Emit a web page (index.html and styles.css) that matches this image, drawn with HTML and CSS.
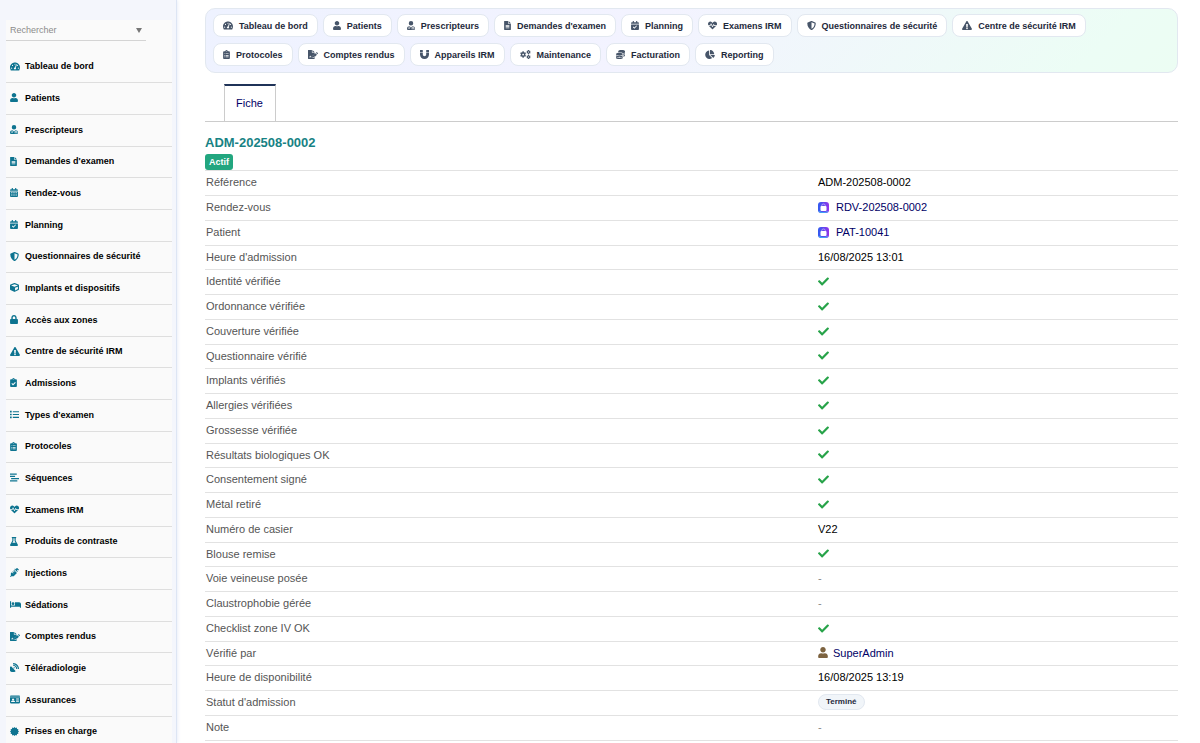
FILE: index.html
```html
<!DOCTYPE html>
<html lang="fr">
<head>
<meta charset="utf-8">
<meta name="viewport" content="width=device-width, initial-scale=1">
<title>ADM-202508-0002</title>
<link rel="stylesheet" href="styles.css">
</head>
<body>
<svg class="sprite" aria-hidden="true">
<defs>
<linearGradient id="app-a" x1="0" y1="0" x2="1" y2="0"><stop offset="0" stop-color="#2f5cf0"/><stop offset="1" stop-color="#9333ea"/></linearGradient>
</defs>
<symbol id="gauge" viewBox="0 0 576 512"><path d="M288 32C128.94 32 0 160.94 0 320c0 52.8 14.25 102.26 39.06 144.8 5.61 9.62 16.3 15.2 27.44 15.2h443c11.14 0 21.83-5.58 27.44-15.2C561.75 422.26 576 372.8 576 320c0-159.06-128.94-288-288-288zm0 64c14.71 0 26.58 10.13 30.32 23.65-1.11 2.26-2.64 4.23-3.45 6.67l-9.22 27.67c-5.13 3.49-10.97 6.01-17.64 6.01-17.67 0-32-14.33-32-32S270.33 96 288 96zM96 384c-17.67 0-32-14.33-32-32s14.33-32 32-32 32 14.33 32 32-14.33 32-32 32zm48-160c-17.67 0-32-14.33-32-32s14.33-32 32-32 32 14.33 32 32-14.33 32-32 32zm246.77-72.41l-61.33 184C343.13 347.33 352 364.54 352 384c0 11.72-3.38 22.55-8.88 32H232.88c-5.5-9.45-8.88-20.28-8.88-32 0-33.94 26.5-61.43 59.9-63.59l61.34-184.01c4.17-12.56 17.73-19.45 30.36-15.17 12.57 4.19 19.35 17.79 15.17 30.36zm14.66 57.2l15.52-46.55c3.47-1.29 7.13-2.23 11.05-2.23 17.67 0 32 14.33 32 32s-14.33 32-32 32c-11.38-.01-20.89-6.28-26.57-15.22zM480 384c-17.67 0-32-14.33-32-32s14.33-32 32-32 32 14.33 32 32-14.33 32-32 32z"/></symbol>
<symbol id="user" viewBox="0 0 448 512"><path d="M224 256c70.7 0 128-57.3 128-128S294.7 0 224 0 96 57.3 96 128s57.3 128 128 128zm89.6 32h-16.7c-22.2 10.2-46.9 16-72.9 16s-50.6-5.8-72.9-16h-16.7C60.2 288 0 348.2 0 422.4V464c0 26.5 21.5 48 48 48h352c26.5 0 48-21.5 48-48v-41.6c0-74.2-60.2-134.4-134.4-134.4z"/></symbol>
<symbol id="doctor" viewBox="0 0 448 512"><path fill-rule="evenodd" d="M224 256a128 128 0 1 0 0-256 128 128 0 0 0 0 256zM96 292C40 306 0 360 0 422v42c0 26 22 48 48 48h352c26 0 48-22 48-48v-42c0-62-40-116-96-130v52c36 8 56 32 56 64v56h-56v-32h24v-24c0-22-18-32-40-32s-40 10-40 32v24h24v32h-56v-56c0-32 20-56 56-64v-56h-16l-80 90-80-90h-16v84c22 6 36 22 36 44 0 26-20 46-46 46s-46-20-46-46c0-22 14-38 28-44zm22 112a18 18 0 1 0 1 0z"/></symbol>
<symbol id="file" viewBox="0 0 384 512"><path fill-rule="evenodd" d="M24 0h200v136c0 13 11 24 24 24h136v328c0 13-11 24-24 24H24c-13 0-24-11-24-24V24C0 11 11 0 24 0zm232 0 128 128H256zM88 224v40h208v-40zm0 72v40h208v-40zm0 72v40h208v-40z"/></symbol>
<symbol id="calendar" viewBox="0 0 448 512"><path fill-rule="evenodd" d="M96 0h64v64h128V0h64v64h48c26 0 48 22 48 48v48H0v-48c0-26 22-48 48-48h48zM0 192h448v272c0 26-22 48-48 48H48c-26 0-48-22-48-48zm64 52v56h72v-56zm124 0v56h72v-56zm124 0v56h72v-56zM64 364v56h72v-56zm124 0v56h72v-56zm124 0v56h72v-56z"/></symbol>
<symbol id="calcheck" viewBox="0 0 448 512"><path fill-rule="evenodd" d="M96 0h64v64h128V0h64v64h48c26 0 48 22 48 48v48H0v-48c0-26 22-48 48-48h48zM0 192h448v272c0 26-22 48-48 48H48c-26 0-48-22-48-48zm336 96-34-36-112 112-50-50-36 36 86 86z"/></symbol>
<symbol id="shield" viewBox="0 0 512 512"><path d="M466.5 83.7l-192-80a48.15 48.15 0 0 0-36.9 0l-192 80C27.7 91.1 16 108.6 16 128c0 198.5 114.5 335.7 221.5 380.3 11.8 4.9 25.1 4.9 36.9 0C360.1 472.6 496 349.3 496 128c0-19.4-11.7-36.9-29.5-44.3zM256.1 446.3l-.1-381 175.9 73.3c-3.3 151.4-82.1 261.1-175.8 307.7z"/></symbol>
<symbol id="cube" viewBox="0 0 512 512"><path fill-rule="evenodd" d="M239 6 31 84C12 91 0 109 0 129v226c0 18 10 35 27 43l208 104c13 7 29 7 42 0l208-104c17-8 27-25 27-43V129c0-20-12-38-31-45L273 6c-11-4-23-4-34 0zm17 62 192 72v1l-192 78-192-78v-1zm32 357V275l160-65v135z"/></symbol>
<symbol id="lock" viewBox="0 0 448 512"><path d="M400 224h-24v-72C376 68.2 307.8 0 224 0S72 68.2 72 152v72H48c-26.5 0-48 21.5-48 48v192c0 26.5 21.5 48 48 48h352c26.5 0 48-21.5 48-48V272c0-26.5-21.5-48-48-48zm-104 0H152v-72c0-39.7 32.3-72 72-72s72 32.3 72 72v72z"/></symbol>
<symbol id="warn" viewBox="0 0 576 512"><path fill-rule="evenodd" d="M569.5 440C588 472 564.800 512 528 512H48c-37 0-60-40-41.500-72L246.400 24c18.500-32 64.700-32 83.200 0zM238 168l12 184h76l12-184zm50 210a44 44 0 1 0 1 0z"/></symbol>
<symbol id="clipcheck" viewBox="0 0 384 512"><path fill-rule="evenodd" d="M336 64h-80a64 64 0 0 0-128 0H48C22 64 0 86 0 112v352c0 26 22 48 48 48h288c26 0 48-22 48-48V112c0-26-22-48-48-48zM192 40a24 24 0 1 1 0 48 24 24 0 0 1 0-48zm128 226-40-42-116 116-50-50-42 42 92 92z"/></symbol>
<symbol id="clipboard" viewBox="0 0 384 512"><path fill-rule="evenodd" d="M336 64h-80a64 64 0 0 0-128 0H48C22 64 0 86 0 112v352c0 26 22 48 48 48h288c26 0 48-22 48-48V112c0-26-22-48-48-48zM192 40a24 24 0 1 1 0 48 24 24 0 0 1 0-48zM72 192v40h40v-40zm72 0v40h168v-40zm-72 88v40h40v-40zm72 0v40h168v-40zm-72 88v40h40v-40zm72 0v40h168v-40z"/></symbol>
<symbol id="list" viewBox="0 0 512 512"><path d="M0 48h96v96H0zm0 160h96v96H0zm0 160h96v96H0zM160 64h352v64H160zm0 160h352v64H160zm0 160h352v64H160z"/></symbol>
<symbol id="stream" viewBox="0 0 512 512"><path d="M0 32h384v64H0zm0 128h288v64H0zm64 128h448v64H64zM0 416h416v64H0z"/></symbol>
<symbol id="heart" viewBox="0 0 512 512"><path d="M320 244l-50 99c-6 12-23 12-29 0l-71-137-28 66c-2 6-8 10-15 10H55l175 179c14 15 37 15 52 0l175-179H348zM473 74C423 22 340 22 290 74l-34 35-34-35C172 22 89 22 39 74c-46 48-50 122-12 174h89l43-103c5-13 23-13 29 0l69 140 50-99c6-12 23-12 29 0l36 62h117c38-52 34-126-12-174z"/></symbol>
<symbol id="flask" viewBox="0 0 448 512"><path fill-rule="evenodd" d="M120 0h208c13 0 24 11 24 24v16c0 13-11 24-24 24h-8v144l118 214c25 39-3 90-50 90H60c-47 0-75-51-50-90l118-214V64h-8c-13 0-24-11-24-24V24c0-13 11-24 24-24zm72 64v160l-60 96h184l-60-96V64z"/></symbol>
<symbol id="syringe" viewBox="0 0 512 512"><path fill-rule="evenodd" d="M410 0l102 102-34 34-34-34-46 46 46 46-34 34-160-160 34-34 46 46 46-46-34-34zM233 118l161 161-184 184H92L34 512 0 478l49-58V302l60-60 64 64 28-28-64-64 32-32 64 64 28-28-64-64z"/></symbol>
<symbol id="bed" viewBox="0 0 640 512"><path fill-rule="evenodd" d="M0 64h64v256h224V144c0-9 7-16 16-16h224c62 0 112 50 112 112v208h-64v-64H64v64H0zm176 64a80 80 0 1 1 0 160 80 80 0 0 1 0-160z"/></symbol>
<symbol id="sign" viewBox="0 0 576 512"><path fill-rule="evenodd" d="M24 0h200v136c0 13 11 24 24 24h136v60L256 346v70h70l58-58v130c0 13-11 24-24 24H24c-13 0-24-11-24-24V24C0 11 11 0 24 0zm232 0 128 128H256zM64 384v32h144v-32h-40l-32-64-38 64zM520 130l48 48c10 10 10 24 0 34l-30 30-82-82 30-30c10-10 24-10 34 0zM434 182l82 82-180 180h-82v-82z"/></symbol>
<symbol id="dish" viewBox="0 0 512 512"><path d="M306 462c8 8 7 21-3 27-94 55-216 42-297-39-81-81-94-203-39-297 0 0 0 0 0 0zM50 208c5-10 19-12 27-4l104 105 27-27c-5-9-5-20 0-30 10-18 34-22 50-8 15 16 11 40-8 50-9 5-21 5-30 0l-27 27 105 104c8 8 6 22-4 27-78 42-176 30-242-36S8 286 50 208zM193 0c-10-1-17 7-17 16v34c0 8 6 15 15 16 138 9 247 118 256 256 1 8 8 14 16 14h33c9 0 17-7 16-17C502 148 364 10 193 0zm0 97c-9-1-17 7-17 16v33c0 9 6 15 14 16 85 9 152 76 161 161 1 8 8 14 16 14h33c9 0 17-8 16-17C404 200 312 108 193 97z"/></symbol>
<symbol id="card" viewBox="0 0 576 512"><path fill-rule="evenodd" d="M48 32h480c26 0 48 22 48 48v16H0V80c0-26 22-48 48-48zM0 128h576v304c0 26-22 48-48 48H48c-26 0-48-22-48-48zm176 64a64 64 0 1 0 1 0zM64 400h224c0-52-30-68-60-68H124c-30 0-60 16-60 68zM352 200v40h160v-40zm0 72v40h160v-40zm0 72v40h160v-40z"/></symbol>
<symbol id="badge" viewBox="0 0 512 512"><path d="m256 0 56 56 72-22 20 74 74 20-22 72 56 56-56 56 22 72-74 20-20 74-72-22-56 56-56-56-72 22-20-74-74-20 22-72-56-56 56-56-22-72 74-20 20-74 72 22z"/></symbol>
<symbol id="magnet" viewBox="0 0 512 512"><path d="M12 160h136c7 0 12 5 12 12v84c0 128 192 128 192 0v-84c0-7 5-12 12-12h136c7 0 12 5 12 12v80c0 150-106 260-256 260S0 402 0 253v-81c0-7 5-12 12-12zM24 0h112c13 0 24 11 24 24v104H0V24C0 11 11 0 24 0zm352 0h112c13 0 24 11 24 24v104H352V24c0-13 11-24 24-24z"/></symbol>
<symbol id="cogs" viewBox="40 0 600 512"><path fill-rule="evenodd" d="M168 78h72l10 50 34 20 48-17 36 62-38 34v58l38 34-36 62-48-17-34 20-10 50h-72l-10-50-34-20-48 17-36-62 38-34v-58l-38-34 36-62 48 17 34-20zm36 130a48 48 0 1 0 1 0zM488 0h48l8 32 26 15 32-9 24 41-24 24v30l24 24-24 41-32-9-26 15-8 32h-48l-8-32-26-15-32 9-24-41 24-24v-30l-24-24 24-41 32 9 26-15zm24 88a30 30 0 1 0 1 0zM488 276h48l8 32 26 15 32-9 24 41-24 24v30l24 24-24 41-32-9-26 15-8 32h-48l-8-32-26-15-32 9-24-41 24-24v-30l-24-24 24-41 32 9 26-15zm24 88a30 30 0 1 0 1 0z"/></symbol>
<symbol id="coins" viewBox="0 0 512 512"><path d="M0 405c41 29 116 43 192 43s151-14 192-43v43c0 35-86 64-192 64S0 483 0 448zM0 300c41 34 116 52 192 52s151-18 192-52v52c0 35-86 64-192 64S0 387 0 352zM192 160c106 0 192 36 192 80s-86 80-192 80S0 284 0 240s86-80 192-80zM416 311c40-7 74-20 96-36v45c0 26-39 48-96 58zM512 180v44c0 26-39 48-96 58v-42c0-10-3-20-8-28 43-7 80-18 104-32zM320 0c106 0 192 29 192 64s-86 64-192 64-192-29-192-64S214 0 320 0zM512 85v43c0 27-49 50-119 60-44-41-121-60-201-60-21 0-41 1-61 4-2-4-3-28-3-47 41 29 116 43 192 43s151-14 192-43z"/></symbol>
<symbol id="pie" viewBox="0 0 544 512"><path d="M528 288H290l158 158c6 6 16 7 23 1 38-37 65-86 73-141 1-10-6-18-16-18zM511 223C503 103 409 9 289 1c-9-1-17 7-17 16v223h223c9 0 17-8 16-17zM224 288V50c0-10-8-17-18-16C87 51 -4 155 0 280c4 128 114 233 243 232 50-1 97-17 135-44 8-6 9-17 2-24z"/></symbol>
<symbol id="check" viewBox="0 0 512 512"><path d="M173.898 439.404l-166.400-166.400c-9.997-9.997-9.997-26.206 0-36.204l36.203-36.204c9.997-9.998 26.207-9.998 36.204 0L192 312.690 432.095 72.596c9.997-9.997 26.207-9.997 36.204 0l36.203 36.204c9.997 9.997 9.997 26.206 0 36.204l-294.400 294.401c-9.998 9.997-26.207 9.997-36.204-.001z"/></symbol>
<symbol id="app" viewBox="0 0 22 22"><rect width="22" height="22" rx="6" fill="url(#app-a)"/><path d="M3 18q8 5 16 0l1 2q-9 4-18 0z" fill="#38bdf8"/><path d="M7.500 9V7q0-3 3.500-3t3.500 3v2" fill="none" stroke="#c7b8fb" stroke-width="1.500"/><rect x="5" y="8" width="12" height="10" rx="2" fill="#fff"/></symbol>
</svg>

<div class="layout">
<aside class="sidebar">
<div class="panel">
<div class="search">
<select aria-label="Rechercher"><option>Rechercher</option></select>
<svg class="caret" viewBox="0 0 6 5" aria-hidden="true"><path d="M0 0h6L3 5z"/></svg>
</div>
<nav aria-label="Menu principal">
<ul class="menu">
<li><a href="#"><span class="slot"><svg class="icon w10"><use href="#gauge"/></svg></span>Tableau de bord</a></li>
<li><a href="#"><span class="slot"><svg class="icon w8"><use href="#user"/></svg></span>Patients</a></li>
<li><a href="#"><span class="slot"><svg class="icon w8"><use href="#doctor"/></svg></span>Prescripteurs</a></li>
<li><a href="#"><span class="slot"><svg class="icon w7"><use href="#file"/></svg></span>Demandes d'examen</a></li>
<li><a href="#"><span class="slot"><svg class="icon w8"><use href="#calendar"/></svg></span>Rendez-vous</a></li>
<li><a href="#"><span class="slot"><svg class="icon w8"><use href="#calcheck"/></svg></span>Planning</a></li>
<li><a href="#"><span class="slot"><svg class="icon w9"><use href="#shield"/></svg></span>Questionnaires de sécurité</a></li>
<li><a href="#"><span class="slot"><svg class="icon w9"><use href="#cube"/></svg></span>Implants et dispositifs</a></li>
<li><a href="#"><span class="slot"><svg class="icon w8"><use href="#lock"/></svg></span>Accès aux zones</a></li>
<li><a href="#"><span class="slot"><svg class="icon w10"><use href="#warn"/></svg></span>Centre de sécurité IRM</a></li>
<li><a href="#"><span class="slot"><svg class="icon w7"><use href="#clipcheck"/></svg></span>Admissions</a></li>
<li><a href="#"><span class="slot"><svg class="icon w9"><use href="#list"/></svg></span>Types d'examen</a></li>
<li><a href="#"><span class="slot"><svg class="icon w7"><use href="#clipboard"/></svg></span>Protocoles</a></li>
<li><a href="#"><span class="slot"><svg class="icon w9"><use href="#stream"/></svg></span>Séquences</a></li>
<li><a href="#"><span class="slot"><svg class="icon w9"><use href="#heart"/></svg></span>Examens IRM</a></li>
<li><a href="#"><span class="slot"><svg class="icon w8"><use href="#flask"/></svg></span>Produits de contraste</a></li>
<li><a href="#"><span class="slot"><svg class="icon w9"><use href="#syringe"/></svg></span>Injections</a></li>
<li><a href="#"><span class="slot"><svg class="icon w11"><use href="#bed"/></svg></span>Sédations</a></li>
<li><a href="#"><span class="slot"><svg class="icon w10"><use href="#sign"/></svg></span>Comptes rendus</a></li>
<li><a href="#"><span class="slot"><svg class="icon w9"><use href="#dish"/></svg></span>Téléradiologie</a></li>
<li><a href="#"><span class="slot"><svg class="icon w10"><use href="#card"/></svg></span>Assurances</a></li>
<li><a href="#"><span class="slot"><svg class="icon w9"><use href="#badge"/></svg></span>Prises en charge</a></li>
</ul>
</nav>
</div>
</aside>

<main class="content">
<nav class="shortcuts" aria-label="Raccourcis">
<a href="#"><svg class="icon w10"><use href="#gauge"/></svg>Tableau de bord</a>
<a href="#"><svg class="icon w8"><use href="#user"/></svg>Patients</a>
<a href="#"><svg class="icon w8"><use href="#doctor"/></svg>Prescripteurs</a>
<a href="#"><svg class="icon w7"><use href="#file"/></svg>Demandes d'examen</a>
<a href="#"><svg class="icon w8"><use href="#calcheck"/></svg>Planning</a>
<a href="#"><svg class="icon w9"><use href="#heart"/></svg>Examens IRM</a>
<a href="#"><svg class="icon w9"><use href="#shield"/></svg>Questionnaires de sécurité</a>
<a href="#"><svg class="icon w10"><use href="#warn"/></svg>Centre de sécurité IRM</a>
<a href="#"><svg class="icon w7"><use href="#clipboard"/></svg>Protocoles</a>
<a href="#"><svg class="icon w10"><use href="#sign"/></svg>Comptes rendus</a>
<a href="#"><svg class="icon w9"><use href="#magnet"/></svg>Appareils IRM</a>
<a href="#"><svg class="icon w11"><use href="#cogs"/></svg>Maintenance</a>
<a href="#"><svg class="icon w9"><use href="#coins"/></svg>Facturation</a>
<a href="#"><svg class="icon w10"><use href="#pie"/></svg>Reporting</a>
</nav>

<div class="tabs"><a class="tab" href="#">Fiche</a></div>

<header class="record">
<h1>ADM-202508-0002</h1>
<span class="status">Actif</span>
</header>

<table class="fields">
<tbody>
<tr><th scope="row">Référence</th><td>ADM-202508-0002</td></tr>
<tr><th scope="row">Rendez-vous</th><td><a class="ref" href="#"><svg class="app"><use href="#app"/></svg>RDV-202508-0002</a></td></tr>
<tr><th scope="row">Patient</th><td><a class="ref" href="#"><svg class="app"><use href="#app"/></svg>PAT-10041</a></td></tr>
<tr><th scope="row">Heure d'admission</th><td>16/08/2025 13:01</td></tr>
<tr><th scope="row">Identité vérifiée</th><td><svg class="ok" role="img" aria-label="Oui"><use href="#check"/></svg></td></tr>
<tr><th scope="row">Ordonnance vérifiée</th><td><svg class="ok" role="img" aria-label="Oui"><use href="#check"/></svg></td></tr>
<tr><th scope="row">Couverture vérifiée</th><td><svg class="ok" role="img" aria-label="Oui"><use href="#check"/></svg></td></tr>
<tr><th scope="row">Questionnaire vérifié</th><td><svg class="ok" role="img" aria-label="Oui"><use href="#check"/></svg></td></tr>
<tr><th scope="row">Implants vérifiés</th><td><svg class="ok" role="img" aria-label="Oui"><use href="#check"/></svg></td></tr>
<tr><th scope="row">Allergies vérifiées</th><td><svg class="ok" role="img" aria-label="Oui"><use href="#check"/></svg></td></tr>
<tr><th scope="row">Grossesse vérifiée</th><td><svg class="ok" role="img" aria-label="Oui"><use href="#check"/></svg></td></tr>
<tr><th scope="row">Résultats biologiques OK</th><td><svg class="ok" role="img" aria-label="Oui"><use href="#check"/></svg></td></tr>
<tr><th scope="row">Consentement signé</th><td><svg class="ok" role="img" aria-label="Oui"><use href="#check"/></svg></td></tr>
<tr><th scope="row">Métal retiré</th><td><svg class="ok" role="img" aria-label="Oui"><use href="#check"/></svg></td></tr>
<tr><th scope="row">Numéro de casier</th><td>V22</td></tr>
<tr><th scope="row">Blouse remise</th><td><svg class="ok" role="img" aria-label="Oui"><use href="#check"/></svg></td></tr>
<tr><th scope="row">Voie veineuse posée</th><td class="none">-</td></tr>
<tr><th scope="row">Claustrophobie gérée</th><td class="none">-</td></tr>
<tr><th scope="row">Checklist zone IV OK</th><td><svg class="ok" role="img" aria-label="Oui"><use href="#check"/></svg></td></tr>
<tr><th scope="row">Vérifié par</th><td><a class="ref person" href="#"><svg class="avatar"><use href="#user"/></svg>SuperAdmin</a></td></tr>
<tr><th scope="row">Heure de disponibilité</th><td>16/08/2025 13:19</td></tr>
<tr><th scope="row">Statut d'admission</th><td><span class="pill">Terminé</span></td></tr>
<tr><th scope="row">Note</th><td class="none">-</td></tr>
</tbody>
</table>
</main>
</div>
</body>
</html>
```
FILE: styles.css
```css
* { box-sizing: border-box; }

body {
  margin: 0;
  background: #fff;
  color: #000;
  font: 11px/14px "Liberation Sans", Arial, sans-serif;
}

a { color: inherit; text-decoration: none; }

.sprite { position: absolute; width: 0; height: 0; }

.layout {
  display: flex;
  height: 100vh;
  overflow: hidden;
}

/* Sidebar */
.sidebar {
  flex: 0 0 177px;
  padding: 20px 4px 0 6px;
  background: #f4f6fc;
  border-right: 1px solid #dde5f4;
  box-shadow: 0 0 4px #dfe6f4;
  overflow: hidden;
}

.panel { background: #fafafa; min-height: 100%; }

.search {
  display: flex;
  align-items: center;
  width: 140px;
  height: 21px;
  margin-bottom: 11px;
  padding-right: 4px;
  border-bottom: 1px solid #d4d4d4;
}

.search select {
  flex: 1;
  padding: 0 4px;
  border: 0;
  background: transparent;
  appearance: none;
  color: #8c8c8c;
  font: 9px/14px "Liberation Sans", Arial, sans-serif;
}

.caret { width: 6px; height: 5px; fill: #777; pointer-events: none; }

.menu { margin: 0; padding: 0; list-style: none; }

.menu li { height: 32px; border-bottom: 1px solid #dedede; }
.menu li:nth-child(3n + 1) { height: 31px; }

.menu a {
  display: flex;
  align-items: center;
  height: 100%;
  padding: 0 0 2px 4px;
  font-size: 9px;
  font-weight: bold;
}

.slot { display: flex; flex: 0 0 15px; color: #0e7490; }

.icon { height: 9px; fill: currentColor; flex: none; }
.w7 { width: 7px; }
.w8 { width: 8px; }
.w9 { width: 9px; }
.w10 { width: 10px; }
.w11 { width: 11px; }

/* Content */
.content { flex: 1; min-width: 0; padding: 8px 22px 0 28px; }

.shortcuts {
  display: flex;
  flex-wrap: wrap;
  gap: 6px 5px;
  padding: 5px 7px 6px;
  border: 1px solid #e2e8f0;
  border-radius: 10px;
  background: linear-gradient(135deg, #eef2ff 0%, #f3f3ff 45%, #ecfdf5 90%, #ecfdf3 100%);
}

.shortcuts a {
  display: flex;
  align-items: center;
  gap: 6px;
  height: 23px;
  padding: 0 9px;
  border: 1px solid #e2e8f0;
  border-radius: 8px;
  background: #fff;
  color: #1e293b;
  font-size: 9px;
  font-weight: bold;
}

.shortcuts .icon { color: #475569; }

.tabs {
  display: flex;
  margin-top: 11px;
  padding-left: 19px;
  border-bottom: 1px solid #ccc;
}

.tab {
  padding: 10px 12px 11px 11px;
  border: 1px solid #ccc;
  border-top: 2px solid #1f3358;
  border-bottom: 0;
  color: #000066;
}

.record { padding-top: 12px; border-bottom: 1px solid #e2e2e2; }

.record h1 { margin: 0; color: #178284; font-size: 13px; line-height: 18px; }

.status {
  display: block;
  width: fit-content;
  margin-top: 2px;
  padding: 1px 4px;
  border-radius: 3px;
  background: #22a67f;
  color: #fff;
  font-size: 9px;
  font-weight: bold;
}

.fields { width: 100%; border-spacing: 0; table-layout: fixed; }

.fields tr { height: 25px; }
.fields tr:nth-child(4n) { height: 24px; }

.fields th,
.fields td {
  padding: 0 0 2px;
  border-bottom: 1px solid #e2e2e2;
  text-align: left;
  vertical-align: middle;
}

.fields th { width: 63%; padding-left: 1px; color: #555; font-weight: normal; }
.fields .none { color: #888; }

.ref { display: flex; align-items: center; gap: 7px; color: #000066; }
.person { gap: 5px; }

.app { width: 11px; height: 11px; }
.avatar { width: 10px; height: 11px; fill: #7d6340; }
.ok { display: block; width: 11px; height: 11px; fill: #27a349; }

.pill {
  display: block;
  width: fit-content;
  padding: 0 7px;
  border: 1px solid #e2e8f0;
  border-radius: 8px;
  background: #f1f5f9;
  color: #1e293b;
  font-size: 8px;
  font-weight: bold;
}
```
